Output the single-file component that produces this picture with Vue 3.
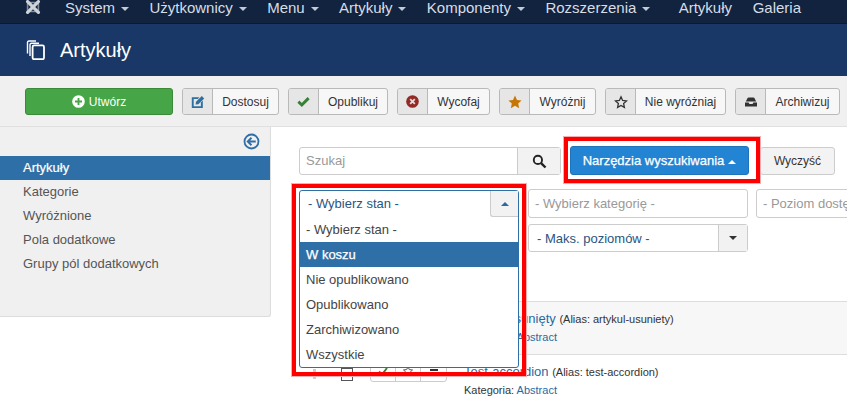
<template>
  <div class="page">
    <nav class="navbar">
      <svg class="logo" viewBox="0 0 20 20" width="18" height="18">
        <g fill="none" stroke="#cfd4da" stroke-linecap="round">
          <path d="M4 4 L16 16 M16 4 L4 16" stroke-width="3.6" />
          <path d="M4 5 H16 M4 15 H16 M4 5 V15 M16 5 V15" stroke-width="1.8" opacity="0.6" />
        </g>
      </svg>
      <a v-for="item in menu" :key="item.name + item.caret" class="nav-link" :class="{ plain: !item.caret }">
        {{ item.name }}<span v-if="item.caret" class="caret"></span>
      </a>
    </nav>

    <header class="subhead">
      <svg class="copy-icon" viewBox="0 0 20 20" width="20" height="20">
        <g fill="none" stroke="#fff" stroke-width="1.4">
          <path d="M1.5 13.5 V2.5 Q1.5 1 3 1 H10" />
          <path d="M4 16 V4.8 Q4 3.2 5.6 3.2 H13" />
          <rect x="6.6" y="5.4" width="11.4" height="13.8" rx="1.5" stroke-width="1.8" />
        </g>
      </svg>
      <h1>Artykuły</h1>
    </header>

    <div class="toolbar">
      <button class="btn-create">
        <svg viewBox="0 0 14 14" width="13" height="13">
          <circle cx="7" cy="7" r="6.8" fill="#fff" />
          <path d="M7 3.2 V10.8 M3.2 7 H10.8" stroke="#46a546" stroke-width="2" />
        </svg>
        Utwórz
      </button>
      <button v-for="b in actions" :key="b.label" class="btn-action" :style="{ width: b.w + 'px' }">
        <span class="btn-icon">
          <svg v-if="b.icon === 'edit'" viewBox="0 0 14 14" width="14" height="14">
            <path d="M.8 2.2 H8.4 L6.8 4 H2.7 V11.2 H9.9 V7.4 L11.8 5.6 V13.1 H.8 Z" fill="#2f6f9f" />
            <path d="M4.6 9.6 L5 6.8 L10.8 1 L13.2 3.4 L7.4 9.2 Z" fill="#2f6f9f" />
          </svg>
          <svg v-else-if="b.icon === 'check'" viewBox="0 0 14 14" width="13" height="13">
            <path d="M1.5 7.2 L5.2 10.8 L12.5 3.4" fill="none" stroke="#378137" stroke-width="3.2" />
          </svg>
          <svg v-else-if="b.icon === 'cancel'" viewBox="0 0 14 14" width="13" height="13">
            <circle cx="7" cy="7" r="6.8" fill="#942a25" />
            <path d="M4.5 4.5 L9.5 9.5 M9.5 4.5 L4.5 9.5" stroke="#e9d8d8" stroke-width="2" />
          </svg>
          <svg v-else-if="b.icon === 'star'" viewBox="0 0 14 14" width="14" height="14">
            <path d="M7 .6 L9 4.9 L13.6 5.4 L10.2 8.5 L11.2 13.2 L7 10.8 L2.8 13.2 L3.8 8.5 L.4 5.4 L5 4.9 Z" fill="#c67605" />
          </svg>
          <svg v-else-if="b.icon === 'star-o'" viewBox="0 0 14 14" width="14" height="14">
            <path d="M7 1.8 L8.6 5.4 L12.5 5.9 L9.6 8.5 L10.4 12.4 L7 10.4 L3.6 12.4 L4.4 8.5 L1.5 5.9 L5.4 5.4 Z" fill="none" stroke="#333" stroke-width="1.3" />
          </svg>
          <svg v-else viewBox="0 0 14 14" width="14" height="14">
            <path d="M3.6 3 Q3.8 2.4 4.6 2.4 H9.4 Q10.2 2.4 10.4 3 L12.2 6.6 H1.8 Z" fill="#333" />
            <path d="M1 7.6 H4.6 L5.4 9 H8.6 L9.4 7.6 H13 V11.6 H1 Z" fill="#333" />
          </svg>
        </span>
        <span class="btn-label">{{ b.label }}</span>
      </button>
    </div>

    <div class="main">
      <aside class="sidebar">
        <div class="collapse-row">
          <svg viewBox="0 0 18 18" width="17" height="17">
            <circle cx="9" cy="9" r="7.4" fill="none" stroke="#2f6fa8" stroke-width="1.9" />
            <path d="M13.5 9 H5.5 M9 5 L5 9 L9 13" fill="none" stroke="#2f6fa8" stroke-width="2" />
          </svg>
        </div>
        <ul>
          <li v-for="(s, i) in sideItems" :key="s" :class="{ active: i === 0 }">{{ s }}</li>
        </ul>
      </aside>

      <section class="content">
        <div class="search-row">
          <div class="search">
            <span class="search-input">Szukaj</span>
            <span class="search-btn">
              <svg viewBox="0 0 16 16" width="15" height="15">
                <circle cx="6.3" cy="6.3" r="4.4" fill="none" stroke="#222" stroke-width="2" />
                <path d="M9.7 9.7 L14.4 14.4" stroke="#222" stroke-width="2.6" />
              </svg>
            </span>
          </div>
          <button class="btn-tools">Narzędzia wyszukiwania<span class="caret up"></span></button>
          <button class="btn-clear">Wyczyść</button>
        </div>

        <div class="filters">
          <div class="state-select"></div>
          <div class="select muted cat">- Wybierz kategorię -</div>
          <div class="select muted level">- Poziom dostępu -</div>
        </div>
        <div class="filters second">
          <div class="state-select"></div>
          <div class="select cat levels">
            <span class="levels-text">- Maks. poziomów -</span>
            <span class="levels-arrow"><span class="caret dark"></span></span>
          </div>
        </div>

        <div class="rows">
          <div class="row shaded">
            <div class="row-ctrl"></div>
            <div class="row-text">
              <div class="title">Artykuł usunięty <small>(Alias: artykul-usuniety)</small></div>
              <div class="cat-line">Kategoria: <a>Abstract</a></div>
            </div>
          </div>
          <div class="row">
            <div class="row-ctrl">
              <span class="handle"></span>
              <span class="check"></span>
              <span class="mini-btns">
                <i><svg viewBox="0 0 10 10" width="10" height="10"><path d="M1 5.5 L4 8.5 L9 2" fill="none" stroke="#378137" stroke-width="2" /></svg></i>
                <i><svg viewBox="0 0 10 10" width="10" height="10"><path d="M5 .6 L6.3 3.6 L9.5 4 L7.2 6.1 L7.9 9.3 L5 7.7 L2.1 9.3 L2.8 6.1 L.5 4 L3.7 3.6 Z" fill="none" stroke="#555" stroke-width="1" /></svg></i>
                <i><svg viewBox="0 0 10 10" width="10" height="10"><path d="M1 4 H9" stroke="#333" stroke-width="2" /></svg></i>
              </span>
            </div>
            <div class="row-text">
              <div class="title">Test-accordion <small>(Alias: test-accordion)</small></div>
              <div class="cat-line">Kategoria: <a>Abstract</a></div>
            </div>
          </div>
        </div>
      </section>
    </div>

    <div class="dropdown">
      <div class="dd-head">
        <span>- Wybierz stan -</span>
        <span class="dd-arrow"><span class="caret blue"></span></span>
      </div>
      <div v-for="o in options" :key="o" class="dd-opt" :class="{ sel: o === 'W koszu' }">{{ o }}</div>
    </div>

    <div class="mark mark-tools"></div>
    <div class="mark mark-state"></div>
  </div>
</template>

<script setup>
const menu = [
  { name: 'System', caret: true },
  { name: 'Użytkownicy', caret: true },
  { name: 'Menu', caret: true },
  { name: 'Artykuły', caret: true },
  { name: 'Komponenty', caret: true },
  { name: 'Rozszerzenia', caret: true },
  { name: 'Artykuły', caret: false },
  { name: 'Galeria', caret: false }
]

const actions = [
  { label: 'Dostosuj', icon: 'edit', w: 97 },
  { label: 'Opublikuj', icon: 'check', w: 100 },
  { label: 'Wycofaj', icon: 'cancel', w: 93 },
  { label: 'Wyróżnij', icon: 'star', w: 97 },
  { label: 'Nie wyróżniaj', icon: 'star-o', w: 121 },
  { label: 'Archiwizuj', icon: 'box', w: 105 }
]

const sideItems = ['Artykuły', 'Kategorie', 'Wyróżnione', 'Pola dodatkowe', 'Grupy pól dodatkowych']

const options = ['- Wybierz stan -', 'W koszu', 'Nie opublikowano', 'Opublikowano', 'Zarchiwizowano', 'Wszystkie']
</script>

<style>
html, body {
  margin: 0;
  background: #fff;
  overflow: hidden;
}
</style>

<style scoped>
.page {
  position: relative;
  width: 847px;
  height: 404px;
  overflow: hidden;
  font-family: "Liberation Sans", Arial, sans-serif;
  font-size: 13px;
  color: #515151;
}

.navbar {
  display: flex;
  align-items: flex-start;
  height: 24px;
  background: #11233f;
  border-bottom: 1px solid #0c1a30;
  box-sizing: border-box;
  padding-left: 24px;
  color: #d8dde4;
  font-size: 15px;
  line-height: 16px;
}
.logo {
  margin-right: 23px;
  margin-top: -2px;
  flex: none;
}
.nav-link {
  margin-right: 20.4px;
  white-space: nowrap;
}
.nav-link.plain {
  margin-left: 8px;
  margin-right: 20.6px;
}
.nav-link.plain:last-child {
  margin-left: 0;
}
.caret {
  display: inline-block;
  margin-left: 6px;
  vertical-align: middle;
  border-left: 4px solid transparent;
  border-right: 4px solid transparent;
  border-top: 4px solid #c4cad3;
}
.caret.up {
  border-top: 0;
  border-bottom: 4px solid #fff;
}
.caret.dark {
  margin: 0;
  border-top-color: #333;
}
.caret.blue {
  margin: 0;
  border-top: 0;
  border-bottom: 4px solid #2a69a4;
}

.subhead {
  display: flex;
  align-items: center;
  height: 52px;
  background: #1a3867;
  padding: 0 0 0 26px;
  color: #fff;
}
.copy-icon {
  margin-right: 14px;
}
.subhead h1 {
  margin: 0;
  font-size: 20px;
  font-weight: 400;
}

.toolbar {
  display: flex;
  align-items: flex-start;
  height: 51px;
  padding: 12px 0 0 25px;
  box-sizing: border-box;
  background: #f0f0f0;
  border-bottom: 1px solid #e0e0e0;
  gap: 9px;
}
.btn-create {
  display: flex;
  align-items: center;
  justify-content: center;
  gap: 4px;
  width: 148px;
  height: 27px;
  background: #46a546;
  border: 1px solid #3a8a3a;
  border-radius: 3px;
  color: #fff;
  font: inherit;
  font-size: 12px;
  padding: 0;
}
.btn-action {
  display: flex;
  height: 27px;
  padding: 0;
  background: #f7f7f7;
  border: 1px solid #b9b9b9;
  border-radius: 3px;
  font: inherit;
  font-size: 12px;
  color: #333;
  box-sizing: border-box;
}
.btn-icon {
  display: flex;
  align-items: center;
  justify-content: center;
  width: 29px;
  flex: none;
  background: #e6e6e6;
  border-right: 1px solid #b9b9b9;
  border-radius: 2px 0 0 2px;
}
.btn-label {
  flex: 1;
  align-self: center;
  text-align: center;
  white-space: nowrap;
}

.main {
  display: flex;
  align-items: flex-start;
}
.sidebar {
  width: 271px;
  height: 190px;
  flex: none;
  box-sizing: border-box;
  background: #f0f0f0;
  border-right: 1px solid #ddd;
  border-bottom: 1px solid #ddd;
  border-radius: 0 0 3px 0;
}
.collapse-row {
  display: flex;
  justify-content: flex-end;
  height: 29px;
  padding: 6px 10px 0 0;
  box-sizing: border-box;
}
.sidebar ul {
  list-style: none;
  margin: 0;
  padding: 0;
}
.sidebar li {
  height: 24px;
  line-height: 24px;
  padding-left: 23px;
  font-size: 13px;
  color: #555;
}
.sidebar li.active {
  background: #2f6fa7;
  color: #fff;
  -webkit-text-stroke: 0.2px #fff;
}

.content {
  flex: 1;
  min-width: 0;
  padding: 20px 0 0 28px;
}
.search-row {
  display: flex;
  align-items: flex-start;
}
.search {
  display: flex;
  width: 262px;
  height: 28px;
  box-sizing: border-box;
  border: 1px solid #ccc;
  border-radius: 3px;
  background: #fff;
}
.search-input {
  flex: 1;
  padding-left: 6px;
  line-height: 26px;
  color: #999;
  font-size: 13px;
}
.search-btn {
  display: flex;
  align-items: center;
  justify-content: center;
  width: 42px;
  background: #f2f2f2;
  border-left: 1px solid #ccc;
}
.btn-tools {
  width: 179px;
  height: 29px;
  margin: -1px 0 0 9px;
  background: #2384d3;
  border: 1px solid #1f74b9;
  border-radius: 3px;
  color: #fff;
  font: inherit;
  font-size: 13px;
  -webkit-text-stroke: 0.25px #fff;
  padding: 0;
}
.btn-tools .caret {
  margin-left: 4px;
}
.btn-clear {
  width: 75px;
  height: 28px;
  margin-left: 11px;
  background: #f3f3f3;
  border: 1px solid #ccc;
  border-radius: 3px;
  color: #333;
  font: inherit;
  font-size: 12px;
  padding: 0;
}

.filters {
  display: flex;
  margin-top: 14px;
}
.filters.second {
  margin-top: 6px;
}
.state-select {
  width: 221px;
  flex: none;
}
.select {
  height: 29px;
  box-sizing: border-box;
  border: 1px solid #ccc;
  border-radius: 3px;
  background: #fff;
  line-height: 27px;
  padding-left: 6px;
  font-size: 13px;
  white-space: nowrap;
}
.select.muted {
  color: #999;
}
.cat {
  width: 220px;
  margin-left: 8px;
  flex: none;
}
.level {
  width: 200px;
  margin-left: 8px;
  flex: none;
}
.levels {
  display: flex;
  justify-content: space-between;
  height: 28px;
  padding: 0;
  color: #2a5580;
}
.levels-text {
  padding-left: 8px;
}
.levels-arrow {
  display: flex;
  align-items: center;
  justify-content: center;
  width: 28px;
  background: #f2f2f2;
  border-left: 1px solid #ccc;
}

.rows {
  margin-top: 49px;
}
.row {
  display: flex;
  height: 53px;
  box-sizing: border-box;
  border-top: 1px solid #ddd;
}
.row.shaded {
  background: #f7f7f7;
}
.row-ctrl {
  display: flex;
  align-items: flex-start;
  width: 165px;
  flex: none;
  padding-top: 5px;
  box-sizing: border-box;
}
.handle {
  width: 3px;
  height: 10px;
  margin: 9px 0 0 14px;
  background: #ccc;
}
.check {
  width: 10px;
  height: 11px;
  border: 1px solid #555;
  margin: 8px 0 0 25px;
}
.mini-btns {
  display: flex;
  margin-left: 17px;
  border: 1px solid #ccc;
  border-radius: 3px;
}
.mini-btns i {
  display: flex;
  align-items: center;
  justify-content: center;
  width: 25px;
  height: 20px;
  border-right: 1px solid #ccc;
  box-sizing: border-box;
}
.mini-btns i:last-child {
  border-right: 0;
}
.row-text {
  padding-top: 8px;
}
.title {
  font-size: 13px;
  line-height: 18px;
  color: #2a69a4;
}
.title small {
  font-size: 11px;
  color: #333;
}
.cat-line {
  font-size: 11px;
  line-height: 18px;
  color: #333;
}
.cat-line a {
  color: #2a69a4;
}

.dropdown {
  position: absolute;
  left: 299px;
  top: 190px;
  width: 220px;
  height: 178px;
  box-sizing: border-box;
  background: #fff;
  border: 1px solid #2f6fa7;
  border-radius: 3px;
  font-size: 13px;
  color: #444;
}
.dd-head {
  display: flex;
  justify-content: space-between;
  height: 26px;
  line-height: 25px;
  padding-left: 8px;
  color: #2a5580;
}
.dd-arrow {
  display: flex;
  align-items: center;
  justify-content: center;
  width: 27px;
  background: #f2f2f2;
  border-left: 1px solid #ccc;
  border-bottom: 1px solid #ccc;
  border-radius: 0 0 0 3px;
}
.dd-opt {
  height: 25px;
  line-height: 25px;
  padding-left: 6px;
}
.dd-opt.sel {
  background: #2f6fa7;
  color: #fff;
  -webkit-text-stroke: 0.25px #fff;
}

.mark {
  position: absolute;
  box-sizing: border-box;
  border: 5px solid #f00;
  outline: 1px solid #f4b0b0;
  outline-offset: -1px;
}
.mark-tools {
  left: 563px;
  top: 136px;
  width: 198px;
  height: 48px;
}
.mark-state {
  left: 291px;
  top: 183px;
  width: 236px;
  height: 194px;
}
</style>
